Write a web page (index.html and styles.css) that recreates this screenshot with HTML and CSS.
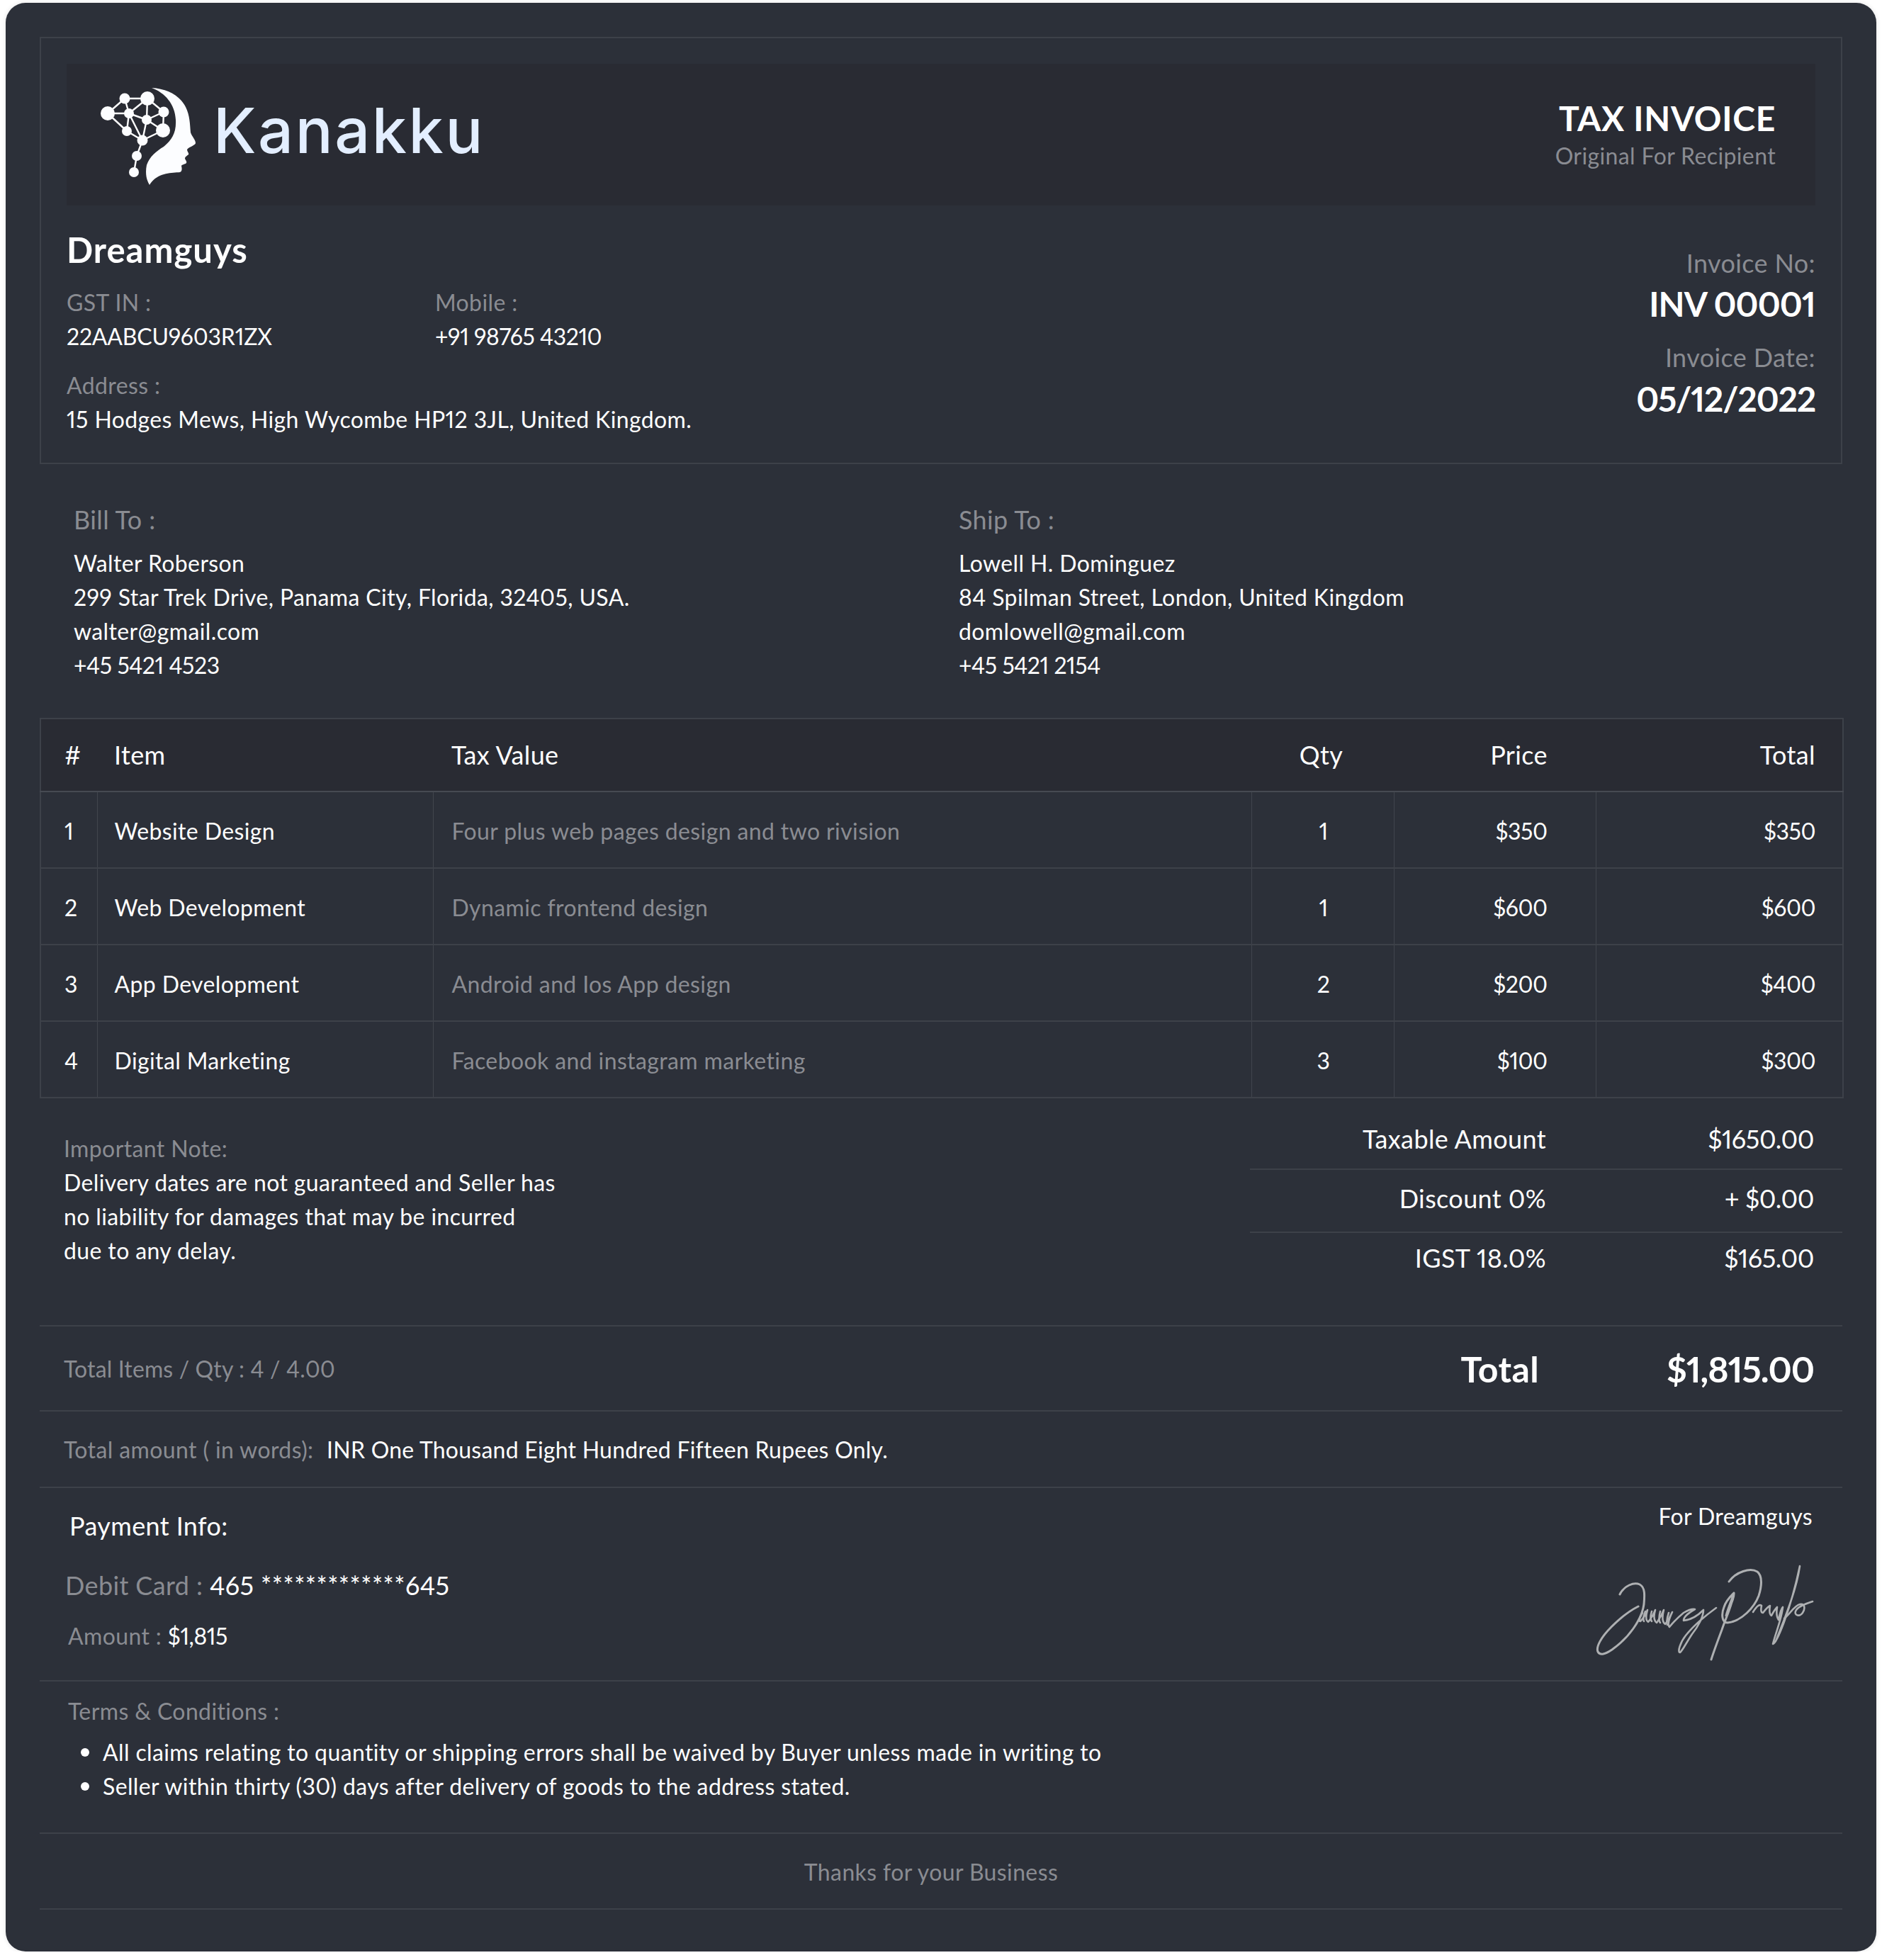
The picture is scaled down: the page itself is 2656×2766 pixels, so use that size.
FILE: index.html
```html
<!DOCTYPE html>
<html lang="en">
<head>
<meta charset="utf-8">
<title>Kanakku Tax Invoice</title>
<link rel="stylesheet" href="styles.css">
</head>
<body>
<main class="card">
  <section class="frame">
    <header class="banner">
      <div class="brand">
        <svg class="brand-mark" viewBox="0 0 170 170" aria-hidden="true">
          <g class="net">
            <path d="M55 36L87 36M55 36L31 57M55 36L61 57M87 36L61 57M87 36L86 66M87 36L110 55M31 57L61 57M31 57L58 82M61 57L86 66M61 57L80 95M61 57L58 82M86 66L110 55M86 66L109 81M86 66L80 95M110 55L109 81M109 81L80 95M58 82L80 95M80 95L72 117M72 117L68 140"/>
          </g>
          <g class="nodes">
            <circle cx="55" cy="36" r="7.5"/><circle cx="87" cy="36" r="10"/><circle cx="31" cy="57" r="10"/>
            <circle cx="61" cy="57" r="7"/><circle cx="110" cy="55" r="7.5"/><circle cx="86" cy="66" r="7"/>
            <circle cx="58" cy="82" r="7"/><circle cx="109" cy="81" r="10"/><circle cx="80" cy="95" r="7.5"/>
            <circle cx="72" cy="117" r="7"/><circle cx="68" cy="140" r="7"/>
          </g>
          <path class="head" d="M93 21C115 22 133 32 141 48C147 60 147 72 148 84C150 90 155 94 155 99C155 102 146 104 143 108C143 111 146 113 145 115C143 117 140 118 140 121C141 123 143 125 142 127C140 129 136 129 135 131C136 135 136 139 133 140C120 141 100 141 90 158C85 150 84 140 86 130C90 118 100 110 110 104C122 94 128 84 127 66C126 44 112 28 93 21Z"/>
        </svg>
        <span class="brand-name">Kanakku</span>
      </div>
      <div class="doc-title">
        <h1>TAX INVOICE</h1>
        <p>Original For Recipient</p>
      </div>
    </header>
    <div class="company">
      <div>
        <h2>Dreamguys</h2>
        <div class="company-ids">
          <div class="id-gst"><span class="muted">GST IN :</span><br><span class="code">22AABCU9603R1ZX</span></div>
          <div><span class="muted">Mobile :</span><br><span class="num">+91 98765 43210</span></div>
        </div>
        <div class="company-addr"><span class="muted">Address :</span><br>15 Hodges Mews, High Wycombe HP12 3JL, United Kingdom.</div>
      </div>
      <div class="invoice-meta">
        <span class="meta-label">Invoice No:</span>
        <strong>INV 00001</strong>
        <span class="meta-label meta-gap">Invoice Date:</span>
        <strong class="meta-date">05/12/2022</strong>
      </div>
    </div>
  </section>

  <section class="parties">
    <div class="party">
      <h3>Bill To :</h3>
      <p>Walter Roberson<br>299 Star Trek Drive, Panama City, Florida, 32405, USA.<br>walter@gmail.com<br><span class="num">+45 5421 4523</span></p>
    </div>
    <div class="party">
      <h3>Ship To :</h3>
      <p>Lowell H. Dominguez<br>84 Spilman Street, London, United Kingdom<br>domlowell@gmail.com<br><span class="num">+45 5421 2154</span></p>
    </div>
  </section>

  <table class="items">
    <colgroup>
      <col class="c1"><col class="c2"><col class="c3"><col class="c4"><col class="c5"><col class="c6">
    </colgroup>
    <thead>
      <tr><th>#</th><th>Item</th><th>Tax Value</th><th class="qty">Qty</th><th class="price">Price</th><th class="total">Total</th></tr>
    </thead>
    <tbody>
      <tr><td>1</td><td>Website Design</td><td class="muted">Four plus web pages design and two rivision</td><td class="qty">1</td><td class="price">$350</td><td class="total">$350</td></tr>
      <tr><td>2</td><td>Web Development</td><td class="muted">Dynamic frontend design</td><td class="qty">1</td><td class="price">$600</td><td class="total">$600</td></tr>
      <tr><td>3</td><td>App Development</td><td class="muted">Android and Ios App design</td><td class="qty">2</td><td class="price">$200</td><td class="total">$400</td></tr>
      <tr><td>4</td><td>Digital Marketing</td><td class="muted">Facebook and instagram marketing</td><td class="qty">3</td><td class="price">$100</td><td class="total">$300</td></tr>
    </tbody>
  </table>

  <section class="notes-row">
    <div class="note">
      <span class="muted">Important Note:</span><br>
      Delivery dates are not guaranteed and Seller has<br>no liability for damages that may be incurred<br>due to any delay.
    </div>
    <div class="summary">
      <div class="sum-row"><span>Taxable Amount</span><span class="num">$1650.00</span></div>
      <div class="sum-row sum-tall"><span>Discount 0%</span><span class="num">+ $0.00</span></div>
      <div class="sum-row"><span>IGST 18.0%</span><span class="num">$165.00</span></div>
    </div>
  </section>

  <section class="total-row">
    <span class="muted items-count">Total Items / Qty : 4 / 4.00</span>
    <div class="grand"><span>Total</span><span class="grand-val">$1,815.00</span></div>
  </section>

  <section class="words">
    <span class="muted">Total amount ( in words):</span> <span class="words-val">INR One Thousand Eight Hundred Fifteen Rupees Only.</span>
  </section>

  <section class="pay-row">
    <div class="pay">
      <h3>Payment Info:</h3>
      <p class="pay-card"><span class="muted">Debit Card :</span> <span>465 *************645</span></p>
      <p class="pay-amount"><span class="muted">Amount :</span> <span class="num">$1,815</span></p>
    </div>
    <div class="sign">
      <span>For Dreamguys</span>
      <svg class="signature" viewBox="0 0 400 180" aria-hidden="true">
        <path d="M86 70C92 58 106 52 114 56C122 60 121 72 120 84C117 106 98 132 75 148C66 154 58 157 55 151C52 144 60 130 74 116C84 106 98 94 112 87"/>
        <path class="fine" d="M118 96Q111 108 115 108Q121 102 125 92Q121 106 126 109Q132 102 136 92Q132 106 138 110Q144 102 148 92Q144 108 150 112Q156 104 160 95Q152 112 156 116Q164 106 176 96Q186 90 192 91Q176 100 176 107Q190 106 204 92C204 102 196 116 188 126C180 138 174 150 171 152C167 152 171 138 179 128C187 118 204 102 222 89"/>
        <path class="fine" d="M122 94Q118 104 120 108M131 94Q128 104 131 108M143 94Q140 106 143 110M155 96Q151 108 153 113"/>
        <path d="M240 52C250 38 270 32 280 38C288 44 286 60 282 72C276 88 258 108 238 110C230 110 229 98 233 88C236 78 243 72 247 68C248 78 238 92 236 100C240 86 244 78 247 68C245 84 236 102 230 120C224 136 218 152 215 162"/>
        <path class="fine" d="M274 95Q282 82 286 86Q284 96 288 96Q294 88 298 86Q296 98 300 100Q304 92 308 88Q306 100 310 106C312 96 314 90 316 88C314 106 306 124 302 140C306 142 326 96 340 30C336 60 322 96 306 136"/>
        <path class="fine" d="M318 104C326 98 332 86 340 84C347 82 348 90 344 96C340 102 332 100 334 94C336 88 346 84 358 80"/>
      </svg>
    </div>
  </section>

  <section class="terms">
    <span class="muted">Terms &amp; Conditions :</span>
    <ul>
      <li>All claims relating to quantity or shipping errors shall be waived by Buyer unless made in writing to</li>
      <li>Seller within thirty (30) days after delivery of goods to the address stated.</li>
    </ul>
  </section>

  <footer class="thanks">Thanks for your Business</footer>
</main>
</body>
</html>
```
FILE: styles.css
```css
* { box-sizing: border-box; }
html, body { margin: 0; padding: 0; background: #fff; }
body { font-family: Lato, "Liberation Sans", sans-serif; color: #fff; font-size: 32px; line-height: 48px; letter-spacing: .38px; font-variant-numeric: proportional-nums; }
h1, h2, h3, p, ul { margin: 0; padding: 0; font-weight: 400; }

.card {
  width: 2640px; height: 2750px; margin: 4px 8px 0;
  padding: 48px 48px 0;
  background: #2c3039;
  border-radius: 28px;
  box-shadow: 0 0 6px rgba(0,0,0,.12);
}
.muted { color: #8a8c92; }
.num { letter-spacing: -.45px; }
.code { letter-spacing: -.2px; }

.frame { width: 2544px; height: 603px; border: 2px solid #3d4149; padding: 36px 36px 0; }
.banner {
  height: 200px; background: #292b33;
  display: flex; justify-content: space-between; align-items: center;
  padding: 0 56px 0 40px;
}
.brand { display: flex; align-items: center; margin-top: -13px; }
.brand-mark { width: 170px; height: 170px; margin: 0 10px 0 -13px; flex: none; position: relative; top: 4px; }
.net path { stroke: #fff; stroke-width: 2.4; fill: none; }
.nodes circle, .head { fill: #fcfdff; }
.brand-name { font: 500 88px/1 Inter, sans-serif; color: #e3eeff; letter-spacing: 2.6px; }
.doc-title { text-align: right; margin-top: 2px; }
.doc-title h1 { font-size: 48px; line-height: 54px; font-weight: 700; letter-spacing: .7px; }
.doc-title p { color: #8a8c92; font-size: 32px; line-height: 44px; margin-top: 4px; }

.company { display: flex; justify-content: space-between; padding-top: 34px; }
.company h2 { font-size: 49px; line-height: 56px; font-weight: 700; letter-spacing: 1px; }
.company-ids { display: flex; margin-top: 23px; }
.id-gst { width: 520px; }
.company-addr { margin-top: 21px; }
.invoice-meta { display: flex; flex-direction: column; align-items: flex-end; padding-top: 23px; }
.meta-label { color: #8a8c92; font-size: 36px; line-height: 48px; }
.meta-gap { margin-top: 23px; }
.invoice-meta strong { font-size: 48px; line-height: 56px; font-weight: 700; margin-top: 6px; letter-spacing: -.8px; }
.invoice-meta .meta-date { letter-spacing: -1.2px; margin-top: 7px; }

.parties { display: grid; grid-template-columns: 1249px 1fr; padding: 54px 0 0 48px; height: 358px; }
.party h3 { color: #8a8c92; font-size: 36px; line-height: 48px; margin-bottom: 14px; }

.items { width: 2544px; border-collapse: collapse; table-layout: fixed; border: 2px solid #3d4149; }
.c1 { width: 80px; } .c2 { width: 474px; } .c3 { width: 1155px; }
.c4 { width: 201px; } .c5 { width: 285px; } .c6 { width: 349px; }
.items th { height: 103px; background: #292b33; font-weight: 400; font-size: 36px; text-align: left; padding: 0 0 2px 26px; border-bottom: 2px solid #464a52; }
.items th:first-child, .items td:first-child { padding-left: 33px; }
.items th:nth-child(2), .items td:nth-child(2) { padding-left: 24px; }
.items td { height: 108px; padding: 3px 0 0 26px; border-top: 2px solid #3d4149; border-left: 1px solid #41454d; }
.items td:first-child { border-left: 0; }
.items .qty { text-align: center; padding-left: 0; padding-right: 4px; }
.items td.qty { padding-right: 0; padding-left: 3px; }
.items .price { text-align: right; padding-left: 0; padding-right: 68px; }
.items .total { text-align: right; padding-left: 0; padding-right: 38px; }
.items td.price, .items td.total { letter-spacing: -.5px; }

.notes-row { display: flex; justify-content: space-between; height: 322px; border-bottom: 2px solid #3d4149; }
.note { padding: 47px 0 0 34px; }
.summary { width: 836px; padding-top: 21px; }
.sum-row { display: flex; justify-content: space-between; height: 80px; padding: 12px 40px 0 0; font-size: 36px; border-bottom: 2px solid #3d4149; }
.sum-tall { height: 89px; padding-top: 16px; }
.sum-row:last-child { border-bottom: 0; padding-top: 11px; }
.sum-row span:first-child { width: 418px; text-align: right; }

.total-row { display: flex; justify-content: space-between; align-items: center; height: 120px; padding: 2px 40px 0 34px; border-bottom: 2px solid #3d4149; }
.items-count { letter-spacing: .13px; }
.grand { display: flex; font-size: 50px; font-weight: 700; }
.grand-val { width: 388px; text-align: right; letter-spacing: -1px; }

.words { height: 108px; padding: 30px 0 0 34px; border-bottom: 2px solid #3d4149; }
.words-val { margin-left: 10px; letter-spacing: .24px; }

.pay-row { display: flex; justify-content: space-between; height: 273px; border-bottom: 2px solid #3d4149; }
.pay { padding-top: 29px; }
.pay h3 { font-size: 36px; line-height: 48px; padding-left: 42px; }
.pay-card { font-size: 36px; margin-top: 36px; padding-left: 36px; }
.pay-amount { margin-top: 24px; padding-left: 40px; }
.sign { display: flex; flex-direction: column; align-items: flex-end; padding: 16px 42px 0 0; }
.signature { width: 400px; height: 180px; margin: 16px -42px 0 0; fill: none; stroke: #aeb0b2; stroke-width: 3; stroke-linecap: round; stroke-linejoin: round; }
.signature .fine { stroke-width: 2.6; }

.terms { height: 215px; padding: 18px 0 0 40px; border-bottom: 2px solid #3d4149; }
.terms ul { margin-top: 10px; padding-left: 18px; list-style: none; }
.terms li { display: flex; align-items: center; }
.terms li::before { content: ""; flex: none; width: 12px; height: 12px; margin-right: 19px; border-radius: 50%; background: #fff; }

.thanks { height: 107px; display: flex; align-items: center; justify-content: center; padding: 2px 28px 0 0; color: #8a8c92; border-bottom: 2px solid #3d4149; }
```
